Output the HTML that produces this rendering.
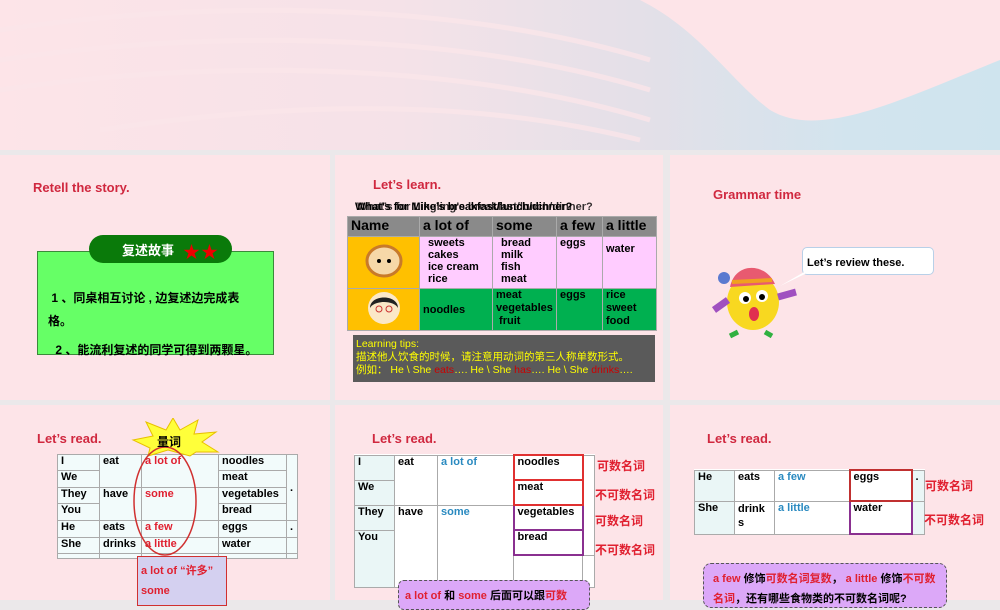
<!DOCTYPE html>
<html><head><meta charset="utf-8"><style>
*{margin:0;padding:0;box-sizing:border-box}
body{width:1000px;height:600px;overflow:hidden;background:#ebe8ea;font-family:"Liberation Sans","Noto Sans CJK SC",sans-serif;position:relative}
.a{position:absolute}
.s{position:absolute;background:#fde4e8;overflow:hidden}
.t{position:absolute;color:#d0283f;font-weight:bold;font-size:13px;white-space:nowrap}
.b{font-weight:bold;white-space:nowrap}
table{border-collapse:collapse;position:absolute}
td{border:1px solid #aaa;font-weight:bold;font-size:11px;vertical-align:top;padding:0 3px;white-space:nowrap}
.r{color:#e02030}.bl{color:#2a8ac0}
</style></head><body>
<!-- top band -->
<div class="s" style="left:0;top:0;width:1000px;height:150px;background:linear-gradient(90deg,#fde4e8 0%,#f5e2e8 40%,#e3e0e8 65%,#d2e4ee 85%,#cfe4ee 100%)">
<svg class="a" style="left:0;top:0" width="1000" height="150"><path d="M640 0 C700 30 730 80 770 110 C820 140 900 100 1000 60 L1000 0 Z" fill="#fde4e8"/>
<g fill="none" stroke="#fbe6ea" stroke-width="5" opacity=".8"><path d="M0 30 C200 0 450 0 650 60"/><path d="M0 60 C200 30 450 30 650 90"/><path d="M0 90 C200 60 450 60 650 120"/><path d="M100 130 C300 100 480 100 640 140"/></g></svg>
</div>
<!-- slide 1 -->
<div class="s" style="left:0;top:155px;width:330px;height:245px"></div>
<div class="t" style="left:33px;top:180px">Retell the story.</div>
<div class="a" style="left:37px;top:251px;width:237px;height:104px;background:#66ff66;border:1px solid #3a8a3a"></div>
<div class="a" style="left:89px;top:235px;width:143px;height:28px;background:#0a7a0a;border-radius:14px"></div>
<div class="a b" style="left:122px;top:240px;color:#fff;font-size:13px">复述故事</div>
<div class="a" style="left:183px;top:238px;color:#e00;font-size:17px;letter-spacing:1px">★★</div>
<div class="a b" style="left:48px;top:287px;font-size:12px;line-height:23px;width:212px;white-space:normal">&nbsp;1 、同桌相互讨论 , 边复述边完成表格。</div>
<div class="a b" style="left:52px;top:341px;font-size:12px">&nbsp;2 、能流利复述的同学可得到两颗星。</div>
<!-- slide 2 -->
<div class="s" style="left:335px;top:155px;width:328px;height:245px"></div>
<div class="t" style="left:373px;top:177px">Let’s learn.</div>
<div class="a b" style="left:355px;top:201px;font-size:11px">What’s for Mike’s breakfast/lunch/dinner?</div>
<div class="a b" style="left:357px;top:201px;font-size:11px;opacity:.8">What’s for Lingling’s breakfast/lunch/dinner?</div>
<table style="left:347px;top:216px;width:310px;height:114px">
<tr style="height:20px;background:#8a8a8a;font-size:13px"><td style="width:72px;font-size:14px">Name</td><td style="width:73px;font-size:14px">a lot of</td><td style="width:64px;font-size:14px">some</td><td style="width:46px;font-size:14px">a few</td><td style="font-size:14px">a little</td></tr>
<tr style="height:52px;background:#ffccff"><td style="background:#ffc000;vertical-align:middle;text-align:center"><svg width="40" height="36"><ellipse cx="20" cy="18" rx="17" ry="15" fill="#f6d8a8" stroke="#c87a2a" stroke-width="3"/><circle cx="15" cy="18" r="2"/><circle cx="25" cy="18" r="2"/></svg></td><td style="line-height:12px;padding-left:8px">sweets<br>cakes<br>ice cream<br>rice</td><td style="line-height:12px;padding-left:8px">bread<br>milk<br>fish<br>meat</td><td>eggs</td><td style="padding-top:6px">water</td></tr>
<tr style="height:42px;background:#00b050"><td style="background:#ffc000;vertical-align:middle;text-align:center"><svg width="40" height="36"><circle cx="20" cy="18" r="16" fill="#fbe8c8"/><path d="M6 18 C6 4 34 4 34 18 C30 10 10 10 6 18Z" fill="#222"/><circle cx="15" cy="19" r="3" fill="none" stroke="#c33"/><circle cx="25" cy="19" r="3" fill="none" stroke="#c33"/></svg></td><td style="vertical-align:middle">noodles</td><td style="line-height:13px">meat<br>vegetables<br>&nbsp;fruit</td><td>eggs</td><td style="line-height:13px">rice<br>sweet<br>food</td></tr>
</table>
<div class="a" style="left:353px;top:335px;width:302px;height:47px;background:#5a5a5a;color:#ff0;font-size:10.5px;line-height:13px;padding:3px 3px">Learning tips:<br>描述他人饮食的时候，请注意用动词的第三人称单数形式。<br>例如： He \ She <span style="color:#c00">eats</span>…. He \ She <span style="color:#c00">has</span>…. He \ She <span style="color:#c00">drinks</span>….</div>
<!-- slide 3 -->
<div class="s" style="left:670px;top:155px;width:330px;height:245px"></div>
<div class="t" style="left:713px;top:187px">Grammar time</div>
<div class="a" style="left:802px;top:247px;width:132px;height:28px;background:#fff;border:1px solid #b8d0e8;border-radius:5px"></div>
<div class="a b" style="left:807px;top:257px;font-size:11px">Let’s review these.</div>
<svg class="a" style="left:710px;top:262px" width="100" height="80"><path d="M115 -2 L70 24 L95 12Z" fill="#fff"/><ellipse cx="43" cy="40" rx="26" ry="28" fill="#f8d820"/><path d="M20 25 C25 0 55 0 65 22Z" fill="#e85a70"/><path d="M22 20 L62 18" stroke="#f0a020" stroke-width="4"/><circle cx="14" cy="16" r="6" fill="#5a7ad0"/><path d="M18 38 L4 48 M68 35 L86 30" stroke="#a050c0" stroke-width="7"/><circle cx="35" cy="36" r="6" fill="#fff"/><circle cx="52" cy="34" r="6" fill="#fff"/><circle cx="36" cy="37" r="3"/><circle cx="52" cy="35" r="3"/><ellipse cx="44" cy="52" rx="5" ry="7" fill="#e03050"/><path d="M28 70 L20 74 M55 70 L62 74" stroke="#30b040" stroke-width="5"/></svg>
<!-- slide 4 -->
<div class="s" style="left:0;top:405px;width:330px;height:195px"></div>
<div class="t" style="left:37px;top:431px">Let’s read.</div>
<table style="left:57px;top:454px;width:241px;background:#f2fbfb">
<tr style="height:16px"><td style="width:42px">I</td><td rowspan="2" style="width:42px">eat</td><td rowspan="2" class="r" style="width:77px;border-left:none">a lot of</td><td style="width:68px">noodles</td><td rowspan="4" style="vertical-align:middle">.</td></tr>
<tr style="height:17px"><td>We</td><td>meat</td></tr>
<tr style="height:16px"><td>They</td><td rowspan="2">have</td><td rowspan="2" class="r">some</td><td>vegetables</td></tr>
<tr style="height:17px"><td>You</td><td>bread</td></tr>
<tr style="height:17px"><td>He</td><td>eats</td><td class="r">a few</td><td>eggs</td><td>.</td></tr>
<tr style="height:16px"><td>She</td><td>drinks</td><td class="r">a little</td><td>water</td><td></td></tr>
<tr style="height:5px"><td></td><td></td><td></td><td></td><td></td></tr>
</table>
<svg class="a" style="left:128px;top:418px" width="100" height="140"><path d="M5 22 L25 18 L18 4 L38 12 L45 0 L52 12 L70 2 L66 16 L88 14 L74 24 L90 34 L68 34 L62 38 L40 32 L20 38 L22 30Z" fill="#ffff3a" stroke="#e8c000"/><ellipse cx="37" cy="83" rx="31" ry="54" fill="none" stroke="#d03030" stroke-width="1.5"/></svg>
<div class="a b" style="left:157px;top:433px;font-size:12px">量词</div>
<div class="a" style="left:137px;top:556px;width:90px;height:50px;background:#d4d0f0;border:1.5px solid #d03030;color:#e02030;font-weight:bold;font-size:11px;line-height:20px;padding:4px 3px">a lot of “许多” some</div>
<!-- slide 5 -->
<div class="s" style="left:335px;top:405px;width:328px;height:195px"></div>
<div class="t" style="left:372px;top:431px">Let’s read.</div>
<table style="left:354px;top:454px;width:241px;height:132px;background:#fff">
<tr style="height:25px"><td style="width:40px;background:#eaf6f6">I</td><td rowspan="2" style="width:43px">eat</td><td rowspan="2" class="bl" style="width:76px">a lot of</td><td style="width:69px;border:2px solid #e03030">noodles</td><td rowspan="4"></td></tr>
<tr style="height:25px"><td style="background:#eaf6f6">We</td><td style="border:2px solid #e03030">meat</td></tr>
<tr style="height:25px"><td style="background:#eaf6f6">They</td><td rowspan="3">have</td><td rowspan="3" class="bl">some</td><td style="border:2px solid #8a3090">vegetables</td></tr>
<tr style="height:25px"><td style="background:#eaf6f6" rowspan="2">You</td><td style="border:2px solid #8a3090">bread</td></tr>
<tr style="height:32px"><td></td><td></td></tr>
</table>
<div class="a b r" style="left:597px;top:457px;font-size:12px">可数名词</div>
<div class="a b r" style="left:595px;top:486px;font-size:12px">不可数名词</div>
<div class="a b r" style="left:595px;top:512px;font-size:12px">可数名词</div>
<div class="a b r" style="left:595px;top:541px;font-size:12px">不可数名词</div>
<div class="a" style="left:398px;top:580px;width:192px;height:30px;background:#dca8f8;border:1.5px dashed #555;border-radius:6px;font-weight:bold;font-size:11px;padding:6px 6px"><span class="r">a lot of</span> 和 <span class="r">some</span> 后面可以跟<span class="r">可数</span></div>
<!-- slide 6 -->
<div class="s" style="left:670px;top:405px;width:330px;height:195px"></div>
<div class="t" style="left:707px;top:431px">Let’s read.</div>
<table style="left:694px;top:469px;width:231px;background:#fff">
<tr style="height:31px"><td style="width:40px;background:#eaf6f6">He</td><td style="width:40px">eats</td><td class="bl" style="width:75px">a few</td><td style="width:62px;border:2px solid #c03030">eggs</td><td style="background:#eaf6f6">.</td></tr>
<tr style="height:33px"><td style="background:#eaf6f6">She</td><td style="line-height:14px">drink<br>s</td><td class="bl">a little</td><td style="border:2px solid #8a3090">water</td><td style="background:#eaf6f6"></td></tr>
</table>
<div class="a b r" style="left:925px;top:477px;font-size:12px">可数名词</div>
<div class="a b r" style="left:924px;top:511px;font-size:12px">不可数名词</div>
<div class="a" style="left:703px;top:563px;width:244px;height:45px;background:#dca8f8;border:1.5px dashed #555;border-radius:8px;font-weight:bold;font-size:11px;line-height:20px;padding:5px 9px"><span class="r">a few</span> 修饰<span class="r">可数名词复数</span>， <span class="r">a little</span> 修饰<span class="r">不可数名词</span>，还有哪些食物类的不可数名词呢?</div>
</body></html>
